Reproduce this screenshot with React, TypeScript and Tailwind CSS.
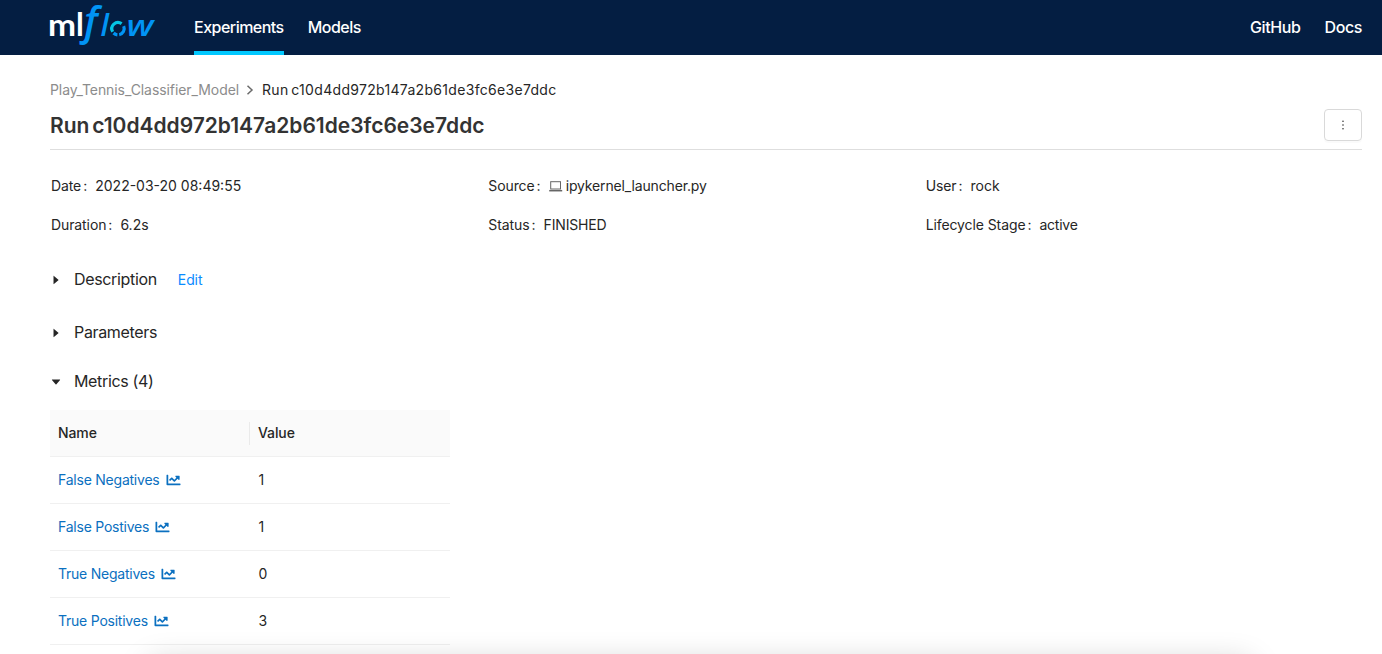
import React from "react";
import { FaChartLine } from "react-icons/fa";
import { AiFillCaretRight, AiFillCaretDown, AiOutlineMore } from "react-icons/ai";

function Logo({ className }: { className?: string }) {
  return (
    <svg viewBox="0 0 115 55" className={className} aria-label="mlflow">
      <text x="3" y="36.3" fill="#fff" fontFamily="Lato" fontWeight="700" fontSize="31" textLength="28" lengthAdjust="spacingAndGlyphs">m</text>
      <text x="31" y="36.3" fill="#fff" fontFamily="Lato" fontWeight="700" fontSize="31.5">l</text>
      <text x="39" y="35.4" fill="#0194f5" fontFamily="Open Sans" fontStyle="italic" fontWeight="600" fontSize="40">f</text>
      <text x="55.4" y="36.3" fill="#0194f5" fontFamily="Open Sans" fontStyle="italic" fontWeight="600" fontSize="30.5">l</text>
      <g fill="none" strokeWidth="3.2" transform="translate(73 28.6)">
        <path d="M-5.3 3.2A6.2 6.2 0 0 1 3.6 -5" stroke="#05c6e4" />
        <path d="M5.7 -2.4A6.2 6.2 0 0 1 1.2 6.1" stroke="#0194f5" />
        <path d="M-0.6 6.2A6.2 6.2 0 0 1 -4.4 4.4" stroke="#0194f5" />
      </g>
      <text x="81.5" y="36.3" fill="#0194f5" fontFamily="Open Sans" fontStyle="italic" fontWeight="600" fontSize="29" textLength="27" lengthAdjust="spacingAndGlyphs">w</text>
    </svg>
  );
}

function Header() {
  return (
    <header className="flex h-[55px] items-start bg-[#041e42] pr-5 pl-[45px] text-base font-medium text-white">
      <div className="w-[149px]"><Logo className="block h-[55px] w-[115px] overflow-visible" /></div>
      <nav className="flex flex-1 gap-6 leading-[51px] tracking-[-0.52px]">
        <a className="h-[55px] border-b-4 border-[#00c8ff] pt-[2px]">Experiments</a>
        <a className="pt-[2px]">Models</a>
      </nav>
      <nav className="flex gap-6 pt-[2px] leading-[51px] tracking-[-0.4px]">
        <a>GitHub</a>
        <a>Docs</a>
      </nav>
    </header>
  );
}

function LaptopIcon() {
  return (
    <svg width="14" height="11" viewBox="0 0 14 11" className="mt-px mr-[3px]" fill="none" stroke="#666">
      <rect x="1.7" y="0.7" width="9.8" height="7.3" />
      <path d="M0.2 9.7H13.2" strokeWidth="1.5" />
    </svg>
  );
}

function ChevronIcon() {
  return (
    <svg width="8" height="10" viewBox="0 0 8 10" className="mr-[8px] ml-[7px]" fill="none" stroke="#6b6b6b" strokeWidth="1.5">
      <path d="M1.5 0.8L6 5L1.5 9.2" />
    </svg>
  );
}

function Meta({ label, children }: { label: string; children: React.ReactNode }) {
  return (
    <div className="flex h-[22px] items-center pl-px">
      <span className="tracking-[-0.1px]">{label}</span>
      <span className="mr-2 ml-[2px]">:</span>
      <span className="flex items-center">{children}</span>
    </div>
  );
}

function Section({ title, open, children }: { title: string; open?: boolean; children?: React.ReactNode }) {
  const Caret = open ? AiFillCaretDown : AiFillCaretRight;
  return (
    <div className="flex h-6 items-center text-base text-[#262626]">
      <Caret className="mt-[2px] mr-3 size-3" />
      <span className="tracking-[-0.34px]">{title}</span>
      {children}
    </div>
  );
}

const metrics = [
  { name: "False Negatives", value: 1 },
  { name: "False Postives", value: 1 },
  { name: "True Negatives", value: 0 },
  { name: "True Positives", value: 3 },
];

export default function App() {
  return (
    <div className="relative h-[654px] overflow-hidden bg-white font-['Inter',sans-serif] text-sm text-[#262626]">
      <Header />
      <main className="pr-5 pl-[50px]">
        <div className="mt-6 flex h-[22px] items-center">
          <span className="tracking-[-0.08px] text-[#8c8c8c]">Play_Tennis_Classifier_Model</span>
          <ChevronIcon />
          <span className="tracking-[0.31px] [word-spacing:-1.5px]">Run c10d4dd972b147a2b61de3fc6e3e7ddc</span>
        </div>
        <div className="flex h-[49px] items-center justify-between border-b border-[#dedede]">
          <h1 className="pt-px text-[21px] font-semibold tracking-[-0.01px] text-[#333] [word-spacing:-2.5px]">Run c10d4dd972b147a2b61de3fc6e3e7ddc</h1>
          <button className="flex h-8 w-[38px] items-center justify-center rounded border border-[#d9d9d9] shadow-[0_2px_0_rgba(0,0,0,0.02)]">
            <AiOutlineMore className="size-[14px]" />
          </button>
        </div>
        <div className="mt-[25px] grid grid-cols-3 gap-y-[17px]">
          <Meta label="Date">2022-03-20 08:49:55</Meta>
          <Meta label="Source"><LaptopIcon /><span className="tracking-[-0.15px]">ipykernel_launcher.py</span></Meta>
          <Meta label="User">rock</Meta>
          <Meta label="Duration">6.2s</Meta>
          <Meta label="Status"><span className="tracking-[-0.15px]">FINISHED</span></Meta>
          <Meta label="Lifecycle Stage"><span className="tracking-[-0.25px]">active</span></Meta>
        </div>
        <div className="mt-[31px]">
          <Section title="Description"><a className="mt-[2px] ml-[21px] text-sm tracking-[-0.1px] text-[#0a8bff]">Edit</a></Section>
        </div>
        <div className="mt-[29px]"><Section title="Parameters" /></div>
        <div className="mt-[25px]"><Section title="Metrics (4)" open /></div>
        <div className="mt-[17px] w-[400px]">
          <div className="flex h-[47px] items-center border-b border-[#f0f0f0] bg-[#fafafa] font-medium tracking-[-0.1px]">
            <div className="flex h-[23px] w-[200px] items-center border-r border-[#eaeaea] pl-2">Name</div>
            <div className="pl-2">Value</div>
          </div>
          {metrics.map((m) => (
            <div key={m.name} className="flex h-[47px] items-center border-b border-[#f0f0f0]">
              <a className="flex w-[200px] items-center pl-2 tracking-[-0.23px] text-[#0b70c0]">
                {m.name}
                <FaChartLine className="ml-[6px] h-[14px] w-[15px]" />
              </a>
              <div className="pl-[8.5px]">{m.value}</div>
            </div>
          ))}
        </div>
      </main>
      <div className="absolute top-[664px] left-[150px] h-10 w-[1100px] shadow-[0_0_32px_rgba(0,0,0,0.22)]" />
    </div>
  );
}
